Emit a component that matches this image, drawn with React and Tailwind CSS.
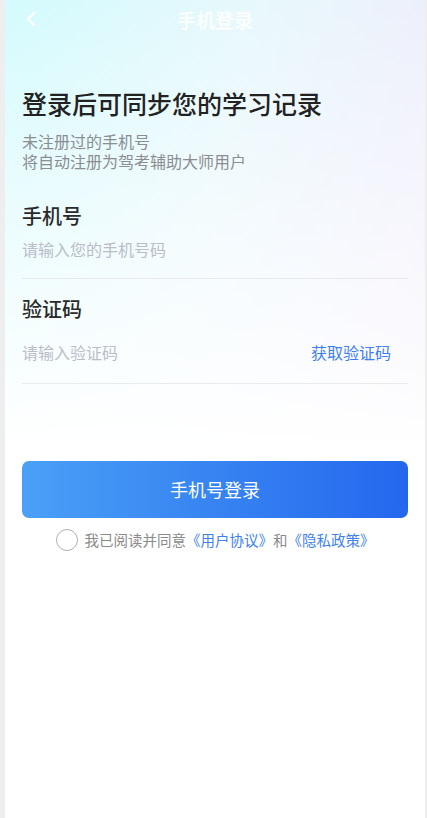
const Field = ({ label, placeholder, action, gap, pad, height }) => (
  <div style={{ marginTop: gap }}>
    <p className="text-[20px] leading-[28px] font-medium text-[#2a2a2a]">{label}</p>
    <div
      className="flex items-start justify-between border-b border-[#e8eaef]"
      style={{ paddingTop: pad, height }}
    >
      <span className="text-[16px] leading-[22px] text-[#babdc9]">{placeholder}</span>
      {action && (
        <span className="text-[16px] leading-[22px] text-[#3e7ff0] mr-[17px]">{action}</span>
      )}
    </div>
  </div>
);

const App = () => {
  return (
    <div className="min-h-[818px] bg-[#eeeeee] pl-[5px] pr-[2px] font-['Noto_Sans_CJK_SC','Noto_Sans',sans-serif]">
      <div className="min-h-[818px] bg-white bg-[linear-gradient(180deg,rgba(255,255,255,0)_0px,rgba(255,255,255,0.45)_200px,#ffffff_450px),linear-gradient(105deg,#d3fbfd_0%,#e8f8fc_40%,#eeeefb_72%,#e2e0fa_100%)]">
        <div className="relative h-[40px] flex items-center justify-center">
          <svg
            className="absolute left-[19px] top-[10px]"
            width="14"
            height="18"
            viewBox="0 0 14 18"
            fill="none"
            stroke="white"
            strokeWidth="2.4"
            strokeLinecap="round"
            strokeLinejoin="round"
          >
            <path d="M10 3 L4 9 L10 15" />
          </svg>
          <span className="text-[19px] font-medium text-white">手机登录</span>
        </div>

        <div className="px-[17px]">
          <h1 className="mt-[46px] text-[25px] leading-[34px] font-medium text-[#222]">
            登录后可同步您的学习记录
          </h1>
          <div className="mt-[11px] text-[16px] text-[#8b8d91]">
            <p className="h-[20px] leading-[20px]">未注册过的手机号</p>
            <p className="h-[20px] leading-[20px]">将自动注册为驾考辅助大师用户</p>
          </div>

          <Field label="手机号" placeholder="请输入您的手机号码" gap={31} pad={8} height={49} />
          <Field
            label="验证码"
            placeholder="请输入验证码"
            action="获取验证码"
            gap={16}
            pad={18}
            height={61}
          />

          <button className="mt-[77px] w-full h-[57px] rounded-[7px] bg-[linear-gradient(90deg,#4aa0f6,#2467ee)] text-[18px] text-white">
            手机号登录
          </button>

          <div className="mt-[11px] flex items-center justify-center text-[14.5px] text-[#8a8a8a]">
            <span className="w-[22px] h-[22px] rounded-full border-[1.5px] border-[#b0b0b0] mr-[7px]" />
            <span>我已阅读并同意</span>
            <span className="text-[#3e7ff0]">《用户协议》</span>
            <span>和</span>
            <span className="text-[#3e7ff0]">《隐私政策》</span>
          </div>
        </div>
      </div>
    </div>
  );
};

export default App;
